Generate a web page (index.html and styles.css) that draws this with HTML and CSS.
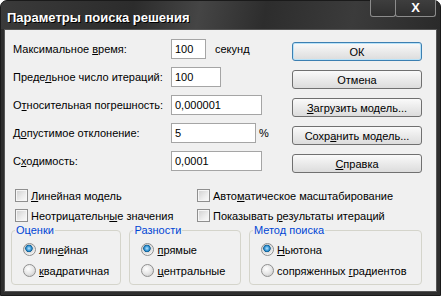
FILE: index.html
```html
<!DOCTYPE html>
<html lang="ru">
<head>
    <meta charset="UTF-8">
    <title>Параметры поиска решения</title>
    <link rel="stylesheet" href="styles.css">
</head>
<body>
    <div class="window">
        <div class="titlebar">
            <span class="title">Параметры поиска решения</span>
            <div class="caption-buttons">
                <span class="cap-btn"></span>
                <span class="cap-btn close">X</span>
            </div>
        </div>
        <div class="client">
            <div class="main">
                <div class="fields">
                    <label>Максимальное <u>в</u>ремя:</label>
                    <div class="cell"><span class="input w35">100</span><span class="unit">секунд</span></div>

                    <label>Преде<u>л</u>ьное число итераций:</label>
                    <div class="cell"><span class="input w50">100</span></div>

                    <label>О<u>т</u>носительная погрешность:</label>
                    <div class="cell"><span class="input w91">0,000001</span></div>

                    <label>Д<u>о</u>пустимое отклонение:</label>
                    <div class="cell"><span class="input w85">5</span><span class="pct">%</span></div>

                    <label>С<u>х</u>одимость:</label>
                    <div class="cell"><span class="input w91">0,0001</span></div>
                </div>
                <div class="buttons">
                    <button class="btn default">ОК</button>
                    <button class="btn">Отмена</button>
                    <button class="btn"><u>З</u>агрузить модель...</button>
                    <button class="btn">Сохр<u>а</u>нить модель...</button>
                    <button class="btn"><u>С</u>правка</button>
                </div>
            </div>

            <div class="checks">
                <div class="check-row"><span class="check"></span><span><u>Л</u>инейная модель</span></div>
                <div class="check-row"><span class="check"></span><span>Авто<u>м</u>атическое масштабирование</span></div>
                <div class="check-row"><span class="check"></span><span>Неотрицательн<u>ы</u>е значения</span></div>
                <div class="check-row"><span class="check"></span><span>Показывать <u>р</u>езультаты итераций</span></div>
            </div>

            <div class="groups">
                <fieldset class="group g-est">
                    <legend>Оценки</legend>
                    <div class="radio-row"><span class="radio on"></span><span>лин<u>е</u>йная</span></div>
                    <div class="radio-row"><span class="radio"></span><span><u>к</u>вадратичная</span></div>
                </fieldset>
                <fieldset class="group g-diff">
                    <legend>Разности</legend>
                    <div class="radio-row"><span class="radio on"></span><span><u>п</u>рямые</span></div>
                    <div class="radio-row"><span class="radio"></span><span><u>ц</u>ентральные</span></div>
                </fieldset>
                <fieldset class="group g-method">
                    <legend>Метод поиска</legend>
                    <div class="radio-row"><span class="radio on"></span><span><u>Н</u>ьютона</span></div>
                    <div class="radio-row"><span class="radio"></span><span>сопряженных <u>г</u>радиентов</span></div>
                </fieldset>
            </div>
        </div>
    </div>
</body>
</html>
```

FILE: styles.css
```css
* {
    margin: 0;
    padding: 0;
    box-sizing: border-box;
}

body {
    width: 441px;
    height: 296px;
    background: #ffffff;
    font-family: Tahoma, 'Liberation Sans', sans-serif;
    font-size: 11px;
    color: #000000;
}

.window {
    width: 441px;
    height: 296px;
    background: #2e2e2e;
    border: 1px solid #1a1a1a;
    border-radius: 7px 7px 0 0;
    padding: 0 3px 3px 3px;
    display: flex;
    flex-direction: column;
}

.titlebar {
    height: 28px;
    display: flex;
    justify-content: space-between;
    align-items: flex-start;
    background: linear-gradient(100deg, #3a3a3a 0%, #2c2c2c 30%, #454545 45%, #2d2d2d 60%, #3b3b3b 80%, #2a2a2a 100%);
    margin: 0 -3px;
    padding: 0 4px 0 6px;
    border-radius: 6px 6px 0 0;
}

.title {
    margin-top: 9px;
    font-size: 13px;
    font-weight: bold;
    color: #ffffff;
    text-shadow: 1px 1px 0 #000000;
}

.caption-buttons {
    display: flex;
    margin-top: -1px;
}

.cap-btn {
    width: 26px;
    height: 17px;
    border: 1px solid #8c8c8c;
    border-top: none;
    background: linear-gradient(#3e3e3e, #2f2f2f);
    border-radius: 0 0 3px 3px;
    color: #ffffff;
    font-weight: bold;
    font-size: 13px;
    text-align: center;
    line-height: 16px;
}

.cap-btn.close {
    width: 41px;
    margin-left: -1px;
}

.client {
    flex: 1;
    background: #f0f0f0;
    border: 1px solid #555555;
    padding: 9px 14px 0 8px;
}

.main {
    display: flex;
    justify-content: space-between;
}

.fields {
    display: grid;
    grid-template-columns: 158px auto;
    grid-auto-rows: 20px;
    row-gap: 8px;
    align-items: center;
}

.cell {
    display: flex;
    align-items: center;
}

.input {
    height: 20px;
    border: 1px solid #a5a5a5;
    background: #ffffff;
    padding: 0 3px;
    line-height: 18px;
}

.w35 { width: 35px; }
.w50 { width: 50px; }
.w85 { width: 85px; }
.w91 { width: 91px; }

.unit {
    margin-left: 9px;
}

.pct {
    margin-left: 3px;
}

.buttons {
    display: flex;
    flex-direction: column;
    gap: 9px;
    margin-top: 3px;
}

.btn {
    width: 130px;
    height: 19px;
    font: inherit;
    color: #000000;
    border: 1px solid #707070;
    border-radius: 3px;
    background: linear-gradient(#fafafa 0%, #ececec 45%, #dcdcdc 100%);
}

.btn.default {
    border-color: #3c7fb1;
    box-shadow: inset 0 0 0 1px #b8e2f8;
}

.checks {
    display: grid;
    grid-template-columns: 182px auto;
    row-gap: 7px;
    margin-top: 16px;
    padding-left: 2px;
}

.check-row,
.radio-row {
    display: flex;
    align-items: center;
    height: 13px;
    white-space: nowrap;
}

.check {
    width: 13px;
    height: 13px;
    margin-right: 3px;
    border: 1px solid #8f8f8f;
    background: linear-gradient(135deg, #cfcfcf 0%, #ededed 60%, #fbfbfb 100%);
    box-shadow: inset 0 0 0 1px #f6f6f6;
}

.groups {
    display: flex;
    gap: 8px;
    margin-top: 2px;
}

.group {
    height: 61px;
    border: 1px solid #d4d4cb;
    border-radius: 4px;
    padding: 6px 0 0 11px;
    display: flex;
    flex-direction: column;
    gap: 8px;
}

.group legend {
    color: #0046d5;
    padding: 0 1px;
    margin-left: -8px;
    line-height: 13px;
}

.g-est { width: 111px; margin-left: -2px; }
.g-diff { width: 112px; }
.g-method { width: 174px; }

.radio {
    width: 13px;
    height: 13px;
    margin-right: 3px;
    border-radius: 50%;
    border: 1px solid #8f8f8f;
    background: radial-gradient(circle at 40% 35%, #ffffff 0%, #e6e6e6 50%, #c4c4c4 100%);
}

.radio.on {
    background: radial-gradient(circle at 45% 40%, #b9e4ff 0%, #3a9ad8 25%, #0c5d94 38%, #d9d9d9 45%, #f2f2f2 70%, #c8c8c8 100%);
}
```
